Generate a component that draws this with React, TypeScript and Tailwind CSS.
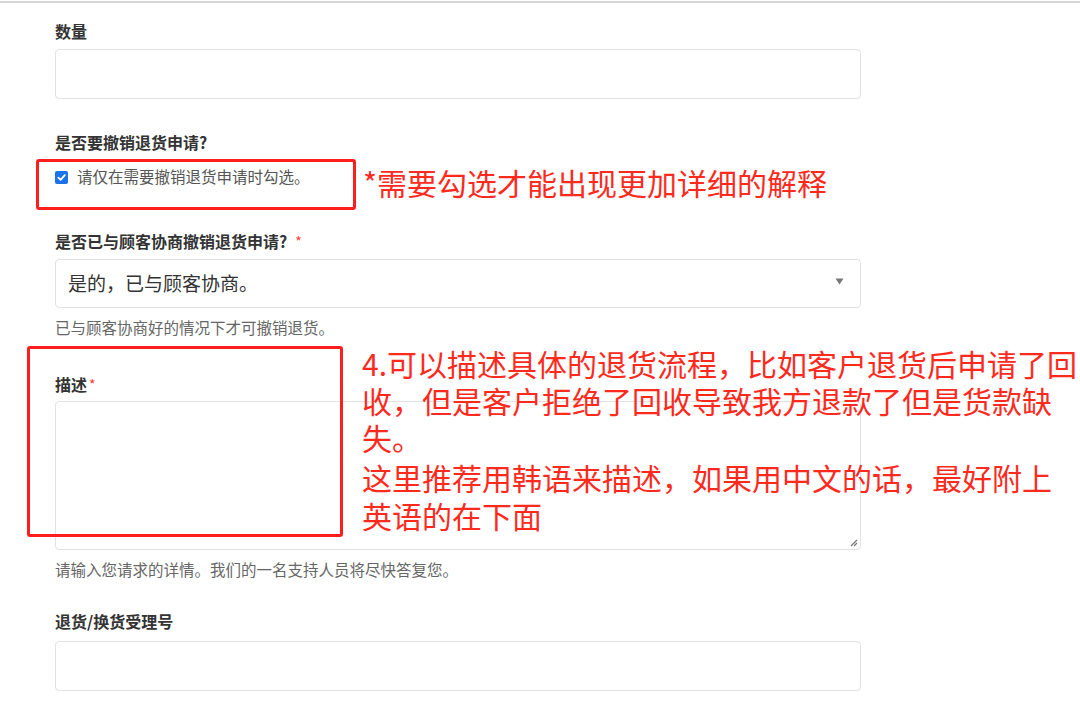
import React from "react";

const font = { fontFamily: '"Noto Sans CJK SC", "Noto Sans", sans-serif' };

function Label({ children, required, tight }: { children: React.ReactNode; required?: boolean; tight?: boolean }) {
  return (
    <div className="h-6 flex items-center text-[16px] font-bold text-[#333] leading-6">
      <span>{children}</span>
      {required && (
        <span className={`text-[#ff3b30] text-[14px] font-normal ${tight ? "ml-[2px]" : "ml-2"}`}>*</span>
      )}
    </div>
  );
}

function TextInput() {
  return <div className="h-[50px] rounded-[4px] border border-[#e2e2e2] bg-white" />;
}

export default function App() {
  return (
    <div className="relative w-[1080px] h-[717px] bg-white overflow-hidden" style={font}>
      <div className="mt-px h-[2px] bg-[#d6d6d6]" />
      <div className="pl-[55px] w-[861px] flex flex-col">
        <div className="mt-4">
          <Label>数量</Label>
        </div>
        <div className="mt-[6px]">
          <TextInput />
        </div>

        <div className="mt-[31px]">
          <Label>是否要撤销退货申请?</Label>
        </div>
        <div className="mt-[11px] flex items-center h-6">
          <span className="w-[13px] h-[13px] rounded-[2px] bg-[#1a73e8] flex items-center justify-center">
            <svg width="11" height="11" viewBox="0 0 12 12">
              <path d="M2.5 6.2 L5 8.6 L9.6 3.4" fill="none" stroke="white" strokeWidth="2" strokeLinecap="round" strokeLinejoin="round" />
            </svg>
          </span>
          <span className="ml-[9px] text-[15.5px] text-[#555]">请仅在需要撤销退货申请时勾选。</span>
        </div>

        <div className="mt-[40px]">
          <Label required>是否已与顾客协商撤销退货申请?</Label>
        </div>
        <div className="mt-[6px] h-[49px] rounded-[4px] border border-[#e2e2e2] bg-white flex items-center justify-between pl-3 pr-[16px]">
          <span className="text-[19px] text-[#333]">是的，已与顾客协商。</span>
          <svg width="9" height="7" viewBox="0 0 9 7" className="mb-1">
            <path d="M0.5 0.5 H8.5 L4.5 6.5 Z" fill="#777" />
          </svg>
        </div>
        <div className="mt-[8px] h-6 flex items-center text-[15.5px] text-[#666]">已与顾客协商好的情况下才可撤销退货。</div>

        <div className="mt-[32px]">
          <Label required tight>描述</Label>
        </div>
        <div className="mt-[5px] relative h-[149px] rounded-[4px] border border-[#e2e2e2] bg-white">
          <svg width="10" height="10" viewBox="0 0 10 10" className="absolute right-[2px] bottom-[2px]">
            <path d="M9 3 L3 9 M9 6 L6 9" stroke="#777" strokeWidth="1.2" />
          </svg>
        </div>
        <div className="mt-[8px] h-6 flex items-center text-[15.5px] text-[#666]">请输入您请求的详情。我们的一名支持人员将尽快答复您。</div>

        <div className="mt-[27px]">
          <Label>退货/换货受理号</Label>
        </div>
        <div className="mt-[8px]">
          <TextInput />
        </div>
      </div>

      {/* annotations */}
      <div className="absolute left-[36px] top-[159px] w-[320px] h-[51px] border-[3px] border-[#ff1e1e] rounded-[3px]" />
      <div className="absolute left-[363px] top-[163px] text-[30px] leading-[38px] text-[#ff2a1e] whitespace-nowrap">
        *需要勾选才能出现更加详细的解释
      </div>
      <div className="absolute left-[27px] top-[346px] w-[316px] h-[191px] border-[3px] border-[#ff1e1e] rounded-[3px]" />
      <div className="absolute left-[362px] top-[345px] text-[30px] text-[#ff2a1e] whitespace-nowrap flex flex-col">
        <div className="h-[37px] leading-[37px]">4.可以描述具体的退货流程，比如客户退货后申请了回</div>
        <div className="h-[37px] leading-[37px]">收，但是客户拒绝了回收导致我方退款了但是货款缺</div>
        <div className="h-[39px] leading-[37px]">失。</div>
        <div className="h-[38px] leading-[38px]">这里推荐用韩语来描述，如果用中文的话，最好附上</div>
        <div className="h-[38px] leading-[38px]">英语的在下面</div>
      </div>
    </div>
  );
}
